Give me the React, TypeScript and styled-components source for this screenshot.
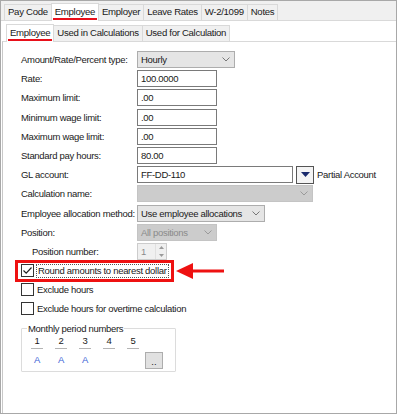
import styled, { createGlobalStyle } from 'styled-components'

const GlobalStyle = createGlobalStyle`
  html, body {
    margin: 0;
    padding: 0;
    background: #ffffff;
  }
  body {
    font-family: 'Liberation Sans', Arial, sans-serif;
    font-size: 9.5px;
    letter-spacing: -0.3px;
    color: #1a1a1a;
  }
  * {
    box-sizing: border-box;
  }
`

const Frame = styled.div`
  width: 397px;
  height: 414px;
  border: 1px solid #a8a8a8;
  background: #f0f0f0;
  display: flex;
  flex-direction: column;
`

const TabStrip = styled.div<{ $inner?: boolean }>`
  display: flex;
  align-items: flex-end;
  height: ${({ $inner }) => ($inner ? '20px' : '19px')};
  padding-left: ${({ $inner }) => ($inner ? '4px' : '3px')};
`

const Tab = styled.div<{ $active?: boolean }>`
  height: ${({ $active }) => ($active ? '18px' : '16px')};
  padding: 0 1px;
  display: flex;
  align-items: center;
  justify-content: center;
  background: ${({ $active }) => ($active ? '#ffffff' : '#f0f0f0')};
  border: 1px solid #d9d9d9;
  border-bottom: none;
  margin-right: -1px;
  margin-bottom: ${({ $active }) => ($active ? '-1px' : '0')};
  position: relative;
  z-index: ${({ $active }) => ($active ? 1 : 0)};
  font-size: 9.6px;
  white-space: nowrap;
`

const TabLabel = styled.span<{ $marked?: boolean }>`
  padding: 0 2px 1px;
  border-bottom: 2px solid ${({ $marked }) => ($marked ? '#e8101a' : 'transparent')};
  line-height: 11px;
`

const Body = styled.div`
  flex: 1;
  background: #ffffff;
  border-top: 1px solid #d9d9d9;
  display: flex;
  flex-direction: column;
  padding-left: 1px;
`

const Content = styled.div`
  flex: 1;
  border-top: 1px solid #d9d9d9;
  border-left: 1px solid #c8c8c8;
  padding: 8px 0 0 18px;
  display: flex;
  flex-direction: column;
`

const FormGrid = styled.div`
  display: grid;
  grid-template-columns: 116px auto;
  grid-auto-rows: 19.2px;
  align-items: center;
`

const Label = styled.div<{ $indent?: boolean }>`
  padding-left: ${({ $indent }) => ($indent ? '11px' : '0')};
  white-space: nowrap;
`

const FieldRow = styled.div`
  display: flex;
  align-items: center;
`

const TextBox = styled.div<{ $width: number }>`
  width: ${({ $width }) => $width}px;
  height: 17px;
  border: 1px solid #7a7a7a;
  background: #ffffff;
  padding: 0 3px;
  display: flex;
  align-items: center;
`

const Select = styled.div<{ $width: number; $disabled?: boolean }>`
  width: ${({ $width }) => $width}px;
  height: 17px;
  border: 1px solid ${({ $disabled }) => ($disabled ? '#c4c4c4' : '#adadad')};
  background: ${({ $disabled }) => ($disabled ? '#cccccc' : '#e5e5e5')};
  color: ${({ $disabled }) => ($disabled ? '#8a8a8a' : '#1a1a1a')};
  padding: 0 4px 0 3px;
  display: flex;
  align-items: center;
  justify-content: space-between;
`

const Chevron = styled.svg`
  width: 8px;
  height: 5px;
  flex: none;
`

const LookupButton = styled.div`
  width: 18px;
  height: 18px;
  margin-left: 3px;
  border: 1px solid #555555;
  background: #f4f4f4;
  display: flex;
  align-items: center;
  justify-content: center;
`

const SideText = styled.span`
  margin-left: 3px;
`

const Spinner = styled.div`
  width: 30px;
  height: 17px;
  border: 1px solid #cccccc;
  background: #f0f0f0;
  color: #8a8a8a;
  display: flex;
  align-items: center;
  justify-content: space-between;
  padding-left: 3px;
`

const SpinButtons = styled.div`
  width: 11px;
  height: 100%;
  display: flex;
  flex-direction: column;
  justify-content: space-around;
  align-items: center;
  border-left: 1px solid #e0e0e0;
`

const CheckList = styled.div`
  display: flex;
  flex-direction: column;
`

const CheckRow = styled.div`
  height: 19.2px;
  display: flex;
  align-items: center;
  gap: 3px;
  white-space: nowrap;
`

const CheckBox = styled.div`
  width: 13px;
  height: 13px;
  border: 1px solid #333333;
  background: #ffffff;
  flex: none;
  display: flex;
  align-items: center;
  justify-content: center;
`

const FocusText = styled.span`
  outline: 1px dotted #555555;
  padding: 0 1px;
  line-height: 12px;
`

const Callout = styled.div`
  display: flex;
  align-items: center;
  margin: -1.5px 0;
`

const RedBox = styled.div`
  border: 3px solid #ee1111;
  padding: 0 3px 0 3px;
  margin-left: -6px;
  height: 22px;
  display: flex;
  align-items: center;
`

const Arrow = styled.svg`
  width: 48px;
  height: 16px;
  margin-left: 2px;
`

const GroupBox = styled.fieldset`
  width: 155px;
  height: 49px;
  margin: 5px 0 0 0;
  padding: 0 0 0 9px;
  border: 1px solid #dcdcdc;
  border-radius: 1px;
  display: flex;
  align-items: flex-start;
`

const Legend = styled.legend`
  padding: 0 1px;
  margin-left: -4px;
  line-height: 11px;
`

const Periods = styled.div`
  display: flex;
  gap: 12px;
  padding-top: 1px;
  align-items: flex-start;
`

const PeriodCol = styled.div`
  width: 12px;
  display: flex;
  flex-direction: column;
  align-items: center;
`

const PeriodNumber = styled.div`
  width: 12px;
  height: 14px;
  text-align: center;
  line-height: 12px;
  border-bottom: 1px solid #b4b4b4;
`

const PeriodValue = styled.div`
  height: 14px;
  line-height: 16px;
  margin-top: 3px;
  color: #3d5fd6;
`

const MoreButton = styled.div`
  width: 18px;
  height: 17px;
  margin: 18px 0 0 6px;
  background: #e1e1e1;
  border: 1px solid #adadad;
  display: flex;
  align-items: flex-end;
  justify-content: center;
  padding-bottom: 3px;
  line-height: 6px;
  letter-spacing: 0;
`

const ChevronIcon = ({ color = '#777' }: { color?: string }) => (
  <Chevron viewBox="0 0 8 5">
    <path d="M0.5 0.5 L4 4 L7.5 0.5" fill="none" stroke={color} strokeWidth="1" />
  </Chevron>
)

const CheckMark = () => (
  <svg width="11" height="11" viewBox="0 0 11 11">
    <path d="M1.5 5.5 L4.2 8.2 L9.5 2.5" fill="none" stroke="#222" strokeWidth="1.2" />
  </svg>
)

const topTabs = ['Pay Code', 'Employee', 'Employer', 'Leave Rates', 'W-2/1099', 'Notes']
const subTabs = ['Employee', 'Used in Calculations', 'Used for Calculation']
const periods = [
  { n: '1', v: 'A' },
  { n: '2', v: 'A' },
  { n: '3', v: 'A' },
  { n: '4', v: '' },
  { n: '5', v: '' },
]

export default function App() {
  return (
    <>
      <GlobalStyle />
      <Frame>
        <TabStrip>
          {topTabs.map(t => (
            <Tab key={t} $active={t === 'Employee'}>
              <TabLabel $marked={t === 'Employee'}>{t}</TabLabel>
            </Tab>
          ))}
        </TabStrip>
        <Body>
          <TabStrip $inner>
            {subTabs.map(t => (
              <Tab key={t} $active={t === 'Employee'}>
                <TabLabel $marked={t === 'Employee'}>{t}</TabLabel>
              </Tab>
            ))}
          </TabStrip>
          <Content>
            <FormGrid>
              <Label>Amount/Rate/Percent type:</Label>
              <FieldRow>
                <Select $width={98}>
                  Hourly
                  <ChevronIcon />
                </Select>
              </FieldRow>
              <Label>Rate:</Label>
              <FieldRow>
                <TextBox $width={80}>100.0000</TextBox>
              </FieldRow>
              <Label>Maximum limit:</Label>
              <FieldRow>
                <TextBox $width={80}>.00</TextBox>
              </FieldRow>
              <Label>Minimum wage limit:</Label>
              <FieldRow>
                <TextBox $width={80}>.00</TextBox>
              </FieldRow>
              <Label>Maximum wage limit:</Label>
              <FieldRow>
                <TextBox $width={80}>.00</TextBox>
              </FieldRow>
              <Label>Standard pay hours:</Label>
              <FieldRow>
                <TextBox $width={80}>80.00</TextBox>
              </FieldRow>
              <Label>GL account:</Label>
              <FieldRow>
                <TextBox $width={156}>FF-DD-110</TextBox>
                <LookupButton>
                  <svg width="9" height="5" viewBox="0 0 9 5">
                    <path d="M0 0 H9 L4.5 5 Z" fill="#1a2a6c" />
                  </svg>
                </LookupButton>
                <SideText>Partial Account</SideText>
              </FieldRow>
              <Label>Calculation name:</Label>
              <FieldRow>
                <Select $width={176} $disabled>
                  <span />
                  <ChevronIcon color="#9a9a9a" />
                </Select>
              </FieldRow>
              <Label>Employee allocation method:</Label>
              <FieldRow>
                <Select $width={128}>
                  Use employee allocations
                  <ChevronIcon />
                </Select>
              </FieldRow>
              <Label>Position:</Label>
              <FieldRow>
                <Select $width={80} $disabled>
                  All positions
                  <ChevronIcon color="#9a9a9a" />
                </Select>
              </FieldRow>
              <Label $indent>Position number:</Label>
              <FieldRow>
                <Spinner>
                  1
                  <SpinButtons>
                    <svg width="5" height="3" viewBox="0 0 5 3">
                      <path d="M0 3 L2.5 0 L5 3 Z" fill="#9a9a9a" />
                    </svg>
                    <svg width="5" height="3" viewBox="0 0 5 3">
                      <path d="M0 0 L2.5 3 L5 0 Z" fill="#9a9a9a" />
                    </svg>
                  </SpinButtons>
                </Spinner>
              </FieldRow>
            </FormGrid>
            <CheckList>
              <Callout>
                <RedBox>
                  <CheckRow>
                    <CheckBox>
                      <CheckMark />
                    </CheckBox>
                    <FocusText>Round amounts to nearest dollar</FocusText>
                  </CheckRow>
                </RedBox>
                <Arrow viewBox="0 0 48 16">
                  <path d="M0 8 L17 0 L17 16 Z" fill="#ee1111" />
                  <rect x="16" y="6.5" width="32" height="3" fill="#ee1111" />
                </Arrow>
              </Callout>
              <CheckRow>
                <CheckBox />
                <span>Exclude hours</span>
              </CheckRow>
              <CheckRow>
                <CheckBox />
                <span>Exclude hours for overtime calculation</span>
              </CheckRow>
            </CheckList>
            <GroupBox>
              <Legend>Monthly period numbers</Legend>
              <Periods>
                {periods.map(p => (
                  <PeriodCol key={p.n}>
                    <PeriodNumber>{p.n}</PeriodNumber>
                    <PeriodValue>{p.v}</PeriodValue>
                  </PeriodCol>
                ))}
              </Periods>
              <MoreButton>..</MoreButton>
            </GroupBox>
          </Content>
        </Body>
      </Frame>
    </>
  )
}
